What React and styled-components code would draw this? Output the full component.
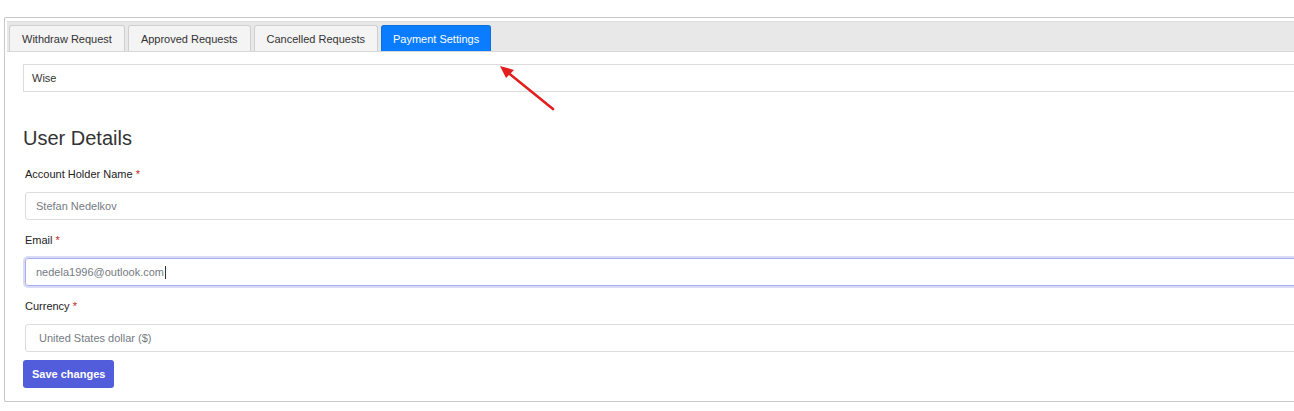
import React from 'react'
import styled, { createGlobalStyle } from 'styled-components'

const GlobalStyle = createGlobalStyle`
    html, body {
        margin: 0;
        padding: 0;
        background: #fff;
        overflow: hidden;
    }
    body {
        font-family: "Liberation Sans", Arial, sans-serif;
        color: #333;
    }
`

const Page = styled.div`
    position: relative;
    width: 1294px;
    height: 411px;
    padding-top: 17px;
    padding-left: 4px;
    box-sizing: border-box;
`

const Panel = styled.div`
    width: 1320px;
    border: 1px solid #c8c8c8;
    border-right: none;
    border-radius: 2px 0 0 2px;
    padding: 3px 0 13px 2px;
`

const TabBar = styled.div`
    display: flex;
    gap: 3px;
    height: 26px;
    padding: 3px 0 0 2px;
    background: #e8e8e8;
    border-top: 1px solid #dedede;
    border-bottom: 1px solid #d8d8d8;
`

const Tab = styled.div`
    display: flex;
    align-items: center;
    height: 26px;
    box-sizing: border-box;
    padding: 0 ${p => (p.active ? '11px' : '12px')};
    font-size: 11px;
    border: 1px solid ${p => (p.active ? '#0a6fe0' : '#cfcfcf')};
    border-bottom: none;
    border-radius: 3px 3px 0 0;
    background: ${p => (p.active ? '#0a7cff' : '#f4f4f4')};
    color: ${p => (p.active ? '#fff' : '#333')};
`

const Content = styled.div`
    padding: 12px 0 0 16px;
`

const MethodSelect = styled.div`
    display: flex;
    align-items: center;
    height: 28px;
    box-sizing: border-box;
    padding-left: 8px;
    font-size: 11px;
    color: #333;
    border: 1px solid #dcdcdc;
`

const Heading = styled.h2`
    margin: 34px 0 16px;
    font-size: 20px;
    font-weight: normal;
    line-height: 24px;
    color: #333;
`

const Field = styled.div`
    padding-left: 2px;
    margin-bottom: 12px;
`

const Label = styled.div`
    font-size: 11px;
    line-height: 16px;
    margin-bottom: 10px;
    color: #222;

    span {
        color: #c41a1a;
    }
`

const Input = styled.div`
    display: flex;
    align-items: center;
    height: 28px;
    box-sizing: border-box;
    padding-left: ${p => (p.select ? '13px' : '10px')};
    font-size: 11px;
    color: #757b83;
    border: 1px solid ${p => (p.focus ? '#a9aef0' : '#dcdcdc')};
    border-radius: 3px;
    box-shadow: ${p => (p.focus ? '0 0 0 2px rgba(82, 93, 220, 0.22)' : 'none')};
`

const Caret = styled.span`
    display: inline-block;
    width: 1px;
    height: 13px;
    margin-left: 1px;
    background: #333;
`

const SaveButton = styled.button`
    margin-top: -4px;
    height: 28px;
    padding: 0 9px;
    font-family: inherit;
    font-size: 11px;
    font-weight: bold;
    color: #fff;
    background: #525ddc;
    border: none;
    border-radius: 3px;
`

const Arrow = styled.svg`
    position: absolute;
    left: 490px;
    top: 58px;
    pointer-events: none;
`

export default function App() {
    return (
        <Page>
            <GlobalStyle />
            <Panel>
                <TabBar>
                    <Tab>Withdraw Request</Tab>
                    <Tab>Approved Requests</Tab>
                    <Tab>Cancelled Requests</Tab>
                    <Tab active>Payment Settings</Tab>
                </TabBar>
                <Content>
                    <MethodSelect>Wise</MethodSelect>
                    <Heading>User Details</Heading>
                    <Field>
                        <Label>Account Holder Name <span>*</span></Label>
                        <Input>Stefan Nedelkov</Input>
                    </Field>
                    <Field>
                        <Label>Email <span>*</span></Label>
                        <Input focus>nedela1996@outlook.com<Caret /></Input>
                    </Field>
                    <Field>
                        <Label>Currency <span>*</span></Label>
                        <Input select>United States dollar ($)</Input>
                    </Field>
                    <SaveButton>Save changes</SaveButton>
                </Content>
            </Panel>
            <Arrow width="80" height="60" viewBox="0 0 80 60">
                <line x1="63" y1="51" x2="16" y2="13" stroke="#e41e1e" strokeWidth="2.6" strokeLinecap="round" />
                <polygon points="10,8 24,12 16,20" fill="#e41e1e" />
            </Arrow>
        </Page>
    )
}
